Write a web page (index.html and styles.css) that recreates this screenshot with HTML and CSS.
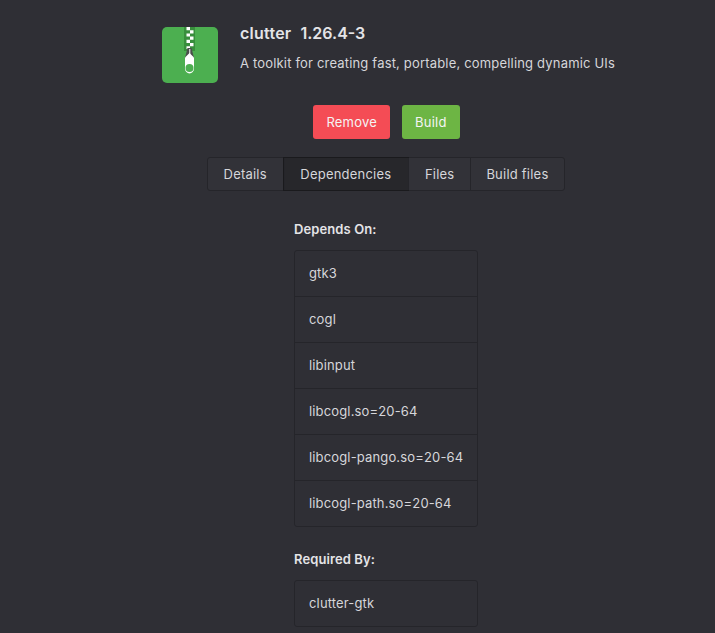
FILE: index.html
```html
<!DOCTYPE html>
<html lang="en">
<head>
<meta charset="utf-8">
<title>clutter</title>
<link rel="stylesheet" href="styles.css">
</head>
<body>
<main class="main">
  <header class="pkg-header">
    <svg class="pkg-icon" width="56" height="56" viewBox="0 0 56 56" aria-hidden="true">
      <rect width="56" height="56" rx="5" fill="#4caf50"/>
      <rect x="22" y="0" width="11" height="24" fill="#388e3c"/>
      <path fill="#fff" d="M24.500 0h3.500v3.200h-3.500zM28 3.200h3.500v3.200h-3.500zM24.500 6.400h3.500v3.200h-3.500zM28 9.600h3.500v3.200h-3.500zM24.500 12.800h3.500v3.200h-3.500zM28 16h3.500v3.200h-3.500zM24.500 19.200h3.500v2.800h-3.500z"/>
      <path fill="#4a4f4b" d="M23 31l2.500-10h4l2.500 10z"/>
      <rect x="27" y="22" width="1.400" height="9" fill="#c8c8c8"/>
      <path fill="#fff" d="M27.500 26l4.500 4.500v11a4.500 5 0 0 1-9 0v-11z"/>
      <circle cx="27.500" cy="41" r="4" fill="#4caf50"/>
    </svg>
    <div class="pkg-info">
      <h1 class="pkg-title"><span class="pkg-name">clutter</span><span>1.26.4-3</span></h1>
      <p class="pkg-desc">A toolkit for creating fast, portable, compelling dynamic UIs</p>
    </div>
  </header>
  <div class="actions">
    <button class="btn btn-red">Remove</button>
    <button class="btn btn-green">Build</button>
  </div>
  <nav class="tabs">
    <a class="tab tab-first">Details</a>
    <a class="tab tab-active">Dependencies</a>
    <a class="tab">Files</a>
    <a class="tab tab-last">Build files</a>
  </nav>
  <section class="dep-section">
    <h2 class="dep-title">Depends On:</h2>
    <ul class="dep-list">
      <li>gtk3</li>
      <li>cogl</li>
      <li>libinput</li>
      <li>libcogl.so=20-64</li>
      <li>libcogl-pango.so=20-64</li>
      <li>libcogl-path.so=20-64</li>
    </ul>
    <h2 class="dep-title dep-title-next">Required By:</h2>
    <ul class="dep-list">
      <li>clutter-gtk</li>
    </ul>
  </section>
</main>
</body>
</html>
```
FILE: styles.css
```css
* { box-sizing: border-box; }
html, body { margin: 0; height: 100%; }
body {
  background: #2f2f35;
  color: #d6d6da;
  font-family: Inter, "Liberation Sans", sans-serif;
  font-size: 13px;
  overflow: hidden;
}
.main {
  height: 633px;
  margin-left: 57px;
  padding-top: 27px;
  display: flex;
  flex-direction: column;
  align-items: center;
}
.pkg-header {
  display: flex;
  gap: 22px;
  margin-left: 5px;
  height: 56px;
}
.pkg-icon { flex: none; display: block; }
.pkg-title {
  margin: -3px 0 0;
  font-size: 16px;
  line-height: 19px;
  font-weight: 600;
  color: #e4e4e7;
  display: flex;
  gap: 9px;
}
.pkg-name { letter-spacing: 0.25px; }
.pkg-desc {
  margin: 12px 0 0;
  font-size: 13px;
  line-height: 16px;
  letter-spacing: 0.18px;
}
.actions {
  display: flex;
  gap: 12px;
  margin-top: 22px;
  margin-left: 1px;
}
.btn {
  height: 34px;
  padding: 0 13px;
  border: 0;
  border-radius: 3px;
  color: #f4f4f4;
  font: 13px/34px Inter, "Liberation Sans", sans-serif;
  letter-spacing: 0.22px;
}
.btn-red { background: #f44c55; }
.btn-green { background: #6db544; }
.tabs {
  display: flex;
  margin-top: 18px;
  height: 34px;
  border: 1px solid #25252a;
  border-radius: 3px;
  background: #323238;
}
.tab {
  padding: 0 16px;
  line-height: 32px;
  letter-spacing: 0.22px;
  border-left: 1px solid #25252a;
}
.tab-first { border-left: 0; padding-right: 17px; }
.tab-active { padding-left: 15.500px; padding-right: 16.500px; }
.tab-last { padding-left: 15px; padding-right: 16px; }
.tab-active {
  background: #27272b;
  outline: 1px solid #1a1a1d;
}
.dep-section {
  width: 184px;
  margin-top: 30px;
}
.dep-title {
  margin: 0;
  font-size: 13px;
  line-height: 16px;
  font-weight: 600;
  letter-spacing: 0.1px;
  color: #e4e4e7;
}
.dep-title-next { margin-top: 24px; }
.dep-list {
  list-style: none;
  margin: 13px 0 0;
  padding: 0;
  border: 1px solid #25252a;
  border-radius: 3px;
}
.dep-list li {
  height: 46px;
  padding: 0 14px;
  line-height: 45px;
  letter-spacing: 0.15px;
  white-space: nowrap;
  border-bottom: 1px solid #25252a;
}
.dep-list li:last-child { border-bottom: 0; height: 45px; }
```
